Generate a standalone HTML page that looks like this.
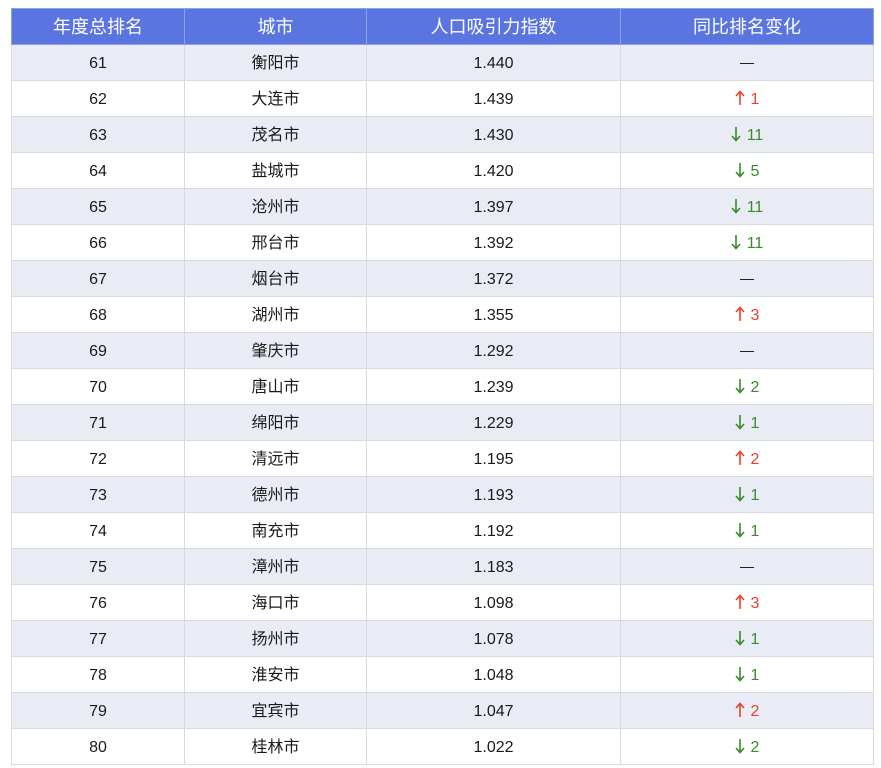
<!DOCTYPE html>
<html><head><meta charset="utf-8"><style>
body{margin:0;background:#fff;width:881px;height:768px;overflow:hidden;font-family:"Liberation Sans","Noto Sans CJK SC",sans-serif;}
table{position:absolute;left:11px;top:8px;border-collapse:collapse;table-layout:fixed;width:862px;}
td,th{border:1px solid #d9d9de;text-align:center;vertical-align:middle;padding:2px 0 0 0;height:33px;font-size:16px;line-height:18px;color:#1a1a1a;font-weight:normal;}
th{background:#5a74e0;color:#fff;font-size:18px;height:35px;padding:0;border-color:#8fa0ea;}
tr:nth-child(even) td{background:#e9ecf4;}
.u{color:#e8412c}.d{color:#3a8a2a}
svg{display:inline-block;vertical-align:-2px;margin-right:6px;}
.m{display:inline-block;width:14px;height:1.5px;background:#222;vertical-align:middle;}
</style></head><body>
<svg width="0" height="0" style="position:absolute">
<defs>
<g id="up"><path d="M5 15V2M1 6L5 1.5L9 6" fill="none" stroke="currentColor" stroke-width="1.6"/></g>
<g id="dn"><path d="M5 1V14M1 10L5 14.5L9 10" fill="none" stroke="currentColor" stroke-width="1.6"/></g>
</defs></svg>
<table>
<colgroup><col style="width:173px"><col style="width:182px"><col style="width:254px"><col style="width:253px"></colgroup>
<tr><th>年度总排名</th><th>城市</th><th>人口吸引力指数</th><th>同比排名变化</th></tr>
<tr><td>61</td><td>衡阳市</td><td>1.440</td><td><span class="m"></span></td></tr>
<tr><td>62</td><td>大连市</td><td>1.439</td><td class="u"><svg width="10" height="16"><use href="#up"/></svg>1</td></tr>
<tr><td>63</td><td>茂名市</td><td>1.430</td><td class="d"><svg width="10" height="16"><use href="#dn"/></svg>11</td></tr>
<tr><td>64</td><td>盐城市</td><td>1.420</td><td class="d"><svg width="10" height="16"><use href="#dn"/></svg>5</td></tr>
<tr><td>65</td><td>沧州市</td><td>1.397</td><td class="d"><svg width="10" height="16"><use href="#dn"/></svg>11</td></tr>
<tr><td>66</td><td>邢台市</td><td>1.392</td><td class="d"><svg width="10" height="16"><use href="#dn"/></svg>11</td></tr>
<tr><td>67</td><td>烟台市</td><td>1.372</td><td><span class="m"></span></td></tr>
<tr><td>68</td><td>湖州市</td><td>1.355</td><td class="u"><svg width="10" height="16"><use href="#up"/></svg>3</td></tr>
<tr><td>69</td><td>肇庆市</td><td>1.292</td><td><span class="m"></span></td></tr>
<tr><td>70</td><td>唐山市</td><td>1.239</td><td class="d"><svg width="10" height="16"><use href="#dn"/></svg>2</td></tr>
<tr><td>71</td><td>绵阳市</td><td>1.229</td><td class="d"><svg width="10" height="16"><use href="#dn"/></svg>1</td></tr>
<tr><td>72</td><td>清远市</td><td>1.195</td><td class="u"><svg width="10" height="16"><use href="#up"/></svg>2</td></tr>
<tr><td>73</td><td>德州市</td><td>1.193</td><td class="d"><svg width="10" height="16"><use href="#dn"/></svg>1</td></tr>
<tr><td>74</td><td>南充市</td><td>1.192</td><td class="d"><svg width="10" height="16"><use href="#dn"/></svg>1</td></tr>
<tr><td>75</td><td>漳州市</td><td>1.183</td><td><span class="m"></span></td></tr>
<tr><td>76</td><td>海口市</td><td>1.098</td><td class="u"><svg width="10" height="16"><use href="#up"/></svg>3</td></tr>
<tr><td>77</td><td>扬州市</td><td>1.078</td><td class="d"><svg width="10" height="16"><use href="#dn"/></svg>1</td></tr>
<tr><td>78</td><td>淮安市</td><td>1.048</td><td class="d"><svg width="10" height="16"><use href="#dn"/></svg>1</td></tr>
<tr><td>79</td><td>宜宾市</td><td>1.047</td><td class="u"><svg width="10" height="16"><use href="#up"/></svg>2</td></tr>
<tr><td>80</td><td>桂林市</td><td>1.022</td><td class="d"><svg width="10" height="16"><use href="#dn"/></svg>2</td></tr>
</table>
</body></html>
